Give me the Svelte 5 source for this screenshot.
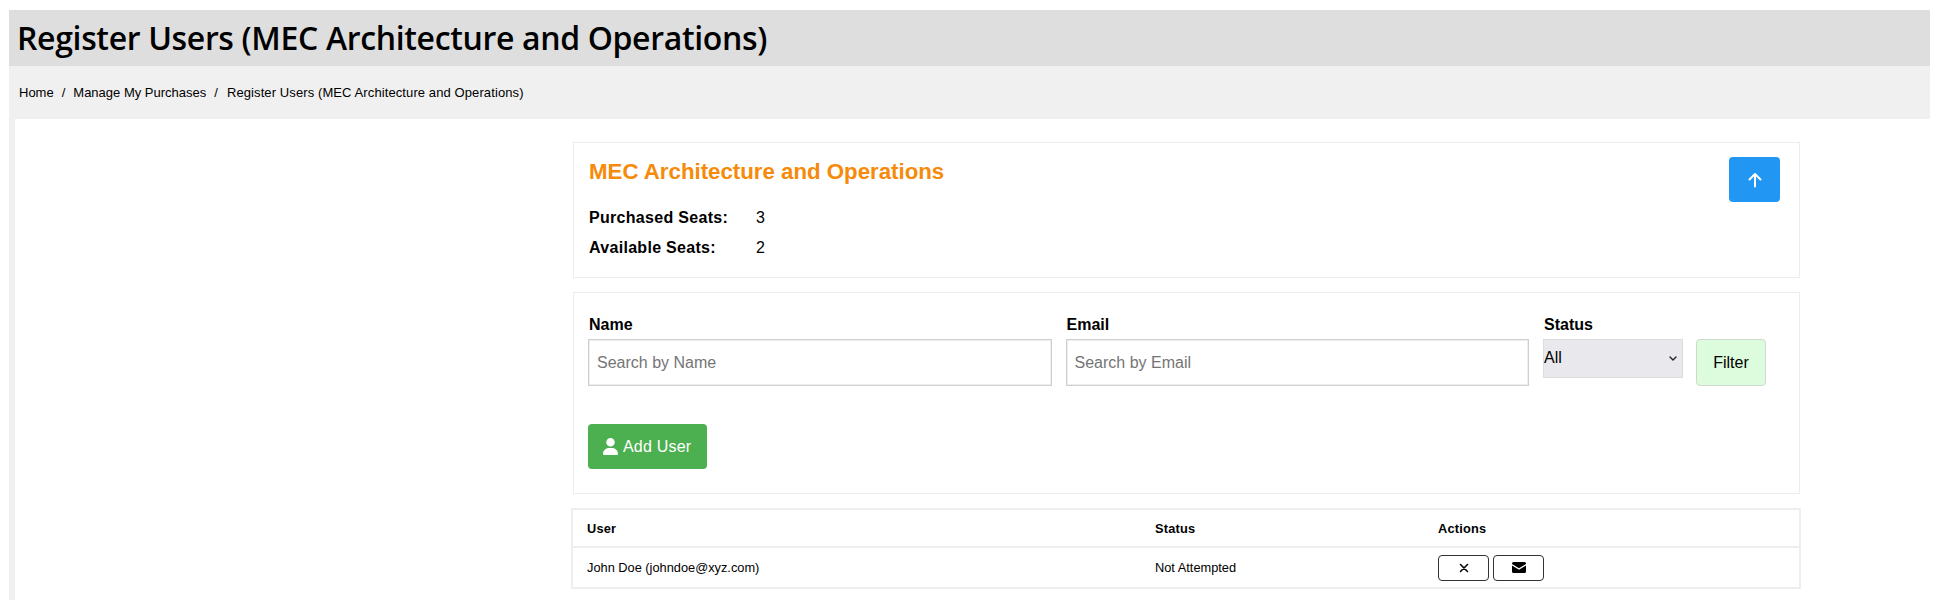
<script>
  const purchased = 3;
  const available = 2;
  const users = [{ name: "John Doe", email: "johndoe@xyz.com", status: "Not Attempted" }];
</script>

<div class="page">
  <h1 class="title">Register Users (MEC Architecture and Operations)</h1>
  <nav class="crumbs">
    <span>Home</span><i>/</i><span>Manage My Purchases</span><i>/</i><span>Register Users (MEC Architecture and Operations)</span>
  </nav>

  <main class="content">
    <section class="card summary">
      <div>
        <h2>MEC Architecture and Operations</h2>
        <div class="seat"><b>Purchased Seats:</b><span>{purchased}</span></div>
        <div class="seat"><b>Available Seats:</b><span>{available}</span></div>
      </div>
      <button class="up" aria-label="Back">
        <svg width="14" height="16" viewBox="0 0 14 16" fill="none" stroke="#fff" stroke-width="2" stroke-linecap="round" stroke-linejoin="round">
          <path d="M7 14.500V2M1.500 7.500 7 2l5.500 5.500" />
        </svg>
      </button>
    </section>

    <section class="card filters">
      <div class="row">
        <label class="field">
          <b>Name</b>
          <input type="text" placeholder="Search by Name" />
        </label>
        <label class="field">
          <b>Email</b>
          <input type="text" placeholder="Search by Email" />
        </label>
        <label class="field status">
          <b>Status</b>
          <span class="select-wrap">
            <select>
              <option>All</option>
            </select>
            <svg class="chevron" width="8" height="5" viewBox="0 0 8 5" fill="none" stroke="#222" stroke-width="1.400" stroke-linecap="round" stroke-linejoin="round"><path d="M1 1l3 3 3-3" /></svg>
          </span>
        </label>
        <button class="filter">Filter</button>
      </div>
      <button class="add">
        <svg width="15" height="17" viewBox="0 0 448 512" preserveAspectRatio="none" fill="#fff">
          <path d="M224 256a128 128 0 1 0 0-256 128 128 0 1 0 0 256zm-45.700 48C79.800 304 0 383.800 0 482.300 0 498.700 13.300 512 29.700 512h388.600c16.400 0 29.700-13.300 29.700-29.700C448 383.800 368.200 304 269.700 304h-91.400z" />
        </svg>
        Add User
      </button>
    </section>

    <table>
      <thead>
        <tr><th class="c1">User</th><th class="c2">Status</th><th>Actions</th></tr>
      </thead>
      <tbody>
        {#each users as u}
          <tr>
            <td>{u.name} ({u.email})</td>
            <td>{u.status}</td>
            <td>
              <div class="actions">
                <button aria-label="Remove">
                  <svg width="10" height="10" viewBox="0 0 10 10" stroke="#000" stroke-width="1.500" stroke-linecap="round"><path d="M1.500 1.500l7 7M8.500 1.500l-7 7" /></svg>
                </button>
                <button aria-label="Email">
                  <svg width="14" height="11" viewBox="0 0 14 11"><path d="M1.500 0h11A1.500 1.500 0 0 1 14 1.500v.6L7 6.300 0 2.100v-.6A1.500 1.500 0 0 1 1.500 0zM0 3.600l7 4.200 7-4.200v5.900A1.500 1.500 0 0 1 12.500 11h-11A1.500 1.500 0 0 1 0 9.500z" /></svg>
                </button>
              </div>
            </td>
          </tr>
        {/each}
      </tbody>
    </table>
  </main>
</div>

<style>
  :global(body) {
    background: #fff;
    font-family: "Liberation Sans", Arial, sans-serif;
    color: #000;
  }
  .page {
    margin: 10px 6px 0 9px;
    background: #f0f0f0;
  }
  .title {
    margin: 0;
    height: 56px;
    padding: 0 0 0 8px;
    background: #dedede;
    font: 600 32px/56px "Open Sans", sans-serif;
    letter-spacing: -0.35px;
  }
  .crumbs {
    height: 53px;
    padding-left: 10px;
    display: flex;
    align-items: center;
    font-size: 13px;
  }
  .crumbs i {
    font-style: normal;
    margin: 0 8px;
  }
  .crumbs span:last-child {
    margin-left: 1px;
    letter-spacing: 0.1px;
  }
  .content {
    margin-left: 6px;
    background: #fff;
    padding: 23px 0 0 558px;
    height: 481px;
    box-sizing: border-box;
  }
  .card {
    width: 1227px;
    box-sizing: border-box;
    border: 1px solid #ededed;
  }
  .summary {
    height: 136px;
    padding: 16px 19px 0 15px;
    display: flex;
    justify-content: space-between;
    align-items: flex-start;
  }
  h2 {
    margin: 0 0 18px;
    font-size: 22.25px;
    line-height: 26px;
    color: #f58a0b;
  }
  .seat {
    display: flex;
    font-size: 16px;
    line-height: 30px;
  }
  .seat b {
    flex: none;
    width: 167px;
    letter-spacing: 0.3px;
  }
  .up {
    width: 51px;
    height: 45px;
    margin-top: -2px;
    padding: 0;
    border: 0;
    border-radius: 4px;
    background: #2196f3;
    display: flex;
    align-items: center;
    justify-content: center;
  }
  .filters {
    height: 202px;
    margin-top: 14px;
    padding: 21px 14px 20px;
  }
  .row {
    display: flex;
    align-items: flex-start;
  }
  .field {
    display: flex;
    flex-direction: column;
    width: 463.5px;
    margin-right: 14px;
    font-size: 16px;
  }
  .field b {
    line-height: 22px;
    margin-bottom: 3px;
    padding-left: 1px;
  }
  input {
    height: 47px;
    box-sizing: border-box;
    border: 1px solid #cfcfcf;
    border-radius: 0;
    padding: 0 8px;
    font: 16px "Liberation Sans", sans-serif;
    box-shadow: inset 0 0 0 1px #eee;
    outline: none;
  }
  input::placeholder {
    color: #757575;
  }
  .status {
    width: 140px;
    margin-right: 13px;
  }
  .select-wrap {
    position: relative;
    display: block;
  }
  select {
    appearance: none;
    display: block;
    width: 100%;
    height: 39px;
    box-sizing: border-box;
    border: 1px solid #dcdcdc;
    background: #e9e9ed;
    color: #000;
    font: 16px "Liberation Sans", sans-serif;
    padding: 0 0 3px;
  }
  .chevron {
    position: absolute;
    right: 6px;
    top: 17px;
  }
  .filter {
    width: 70px;
    height: 47px;
    margin-top: 25px;
    border: 1px solid #ccd9cc;
    border-radius: 4px;
    background: #ddfcdd;
    font: 16px "Liberation Sans", sans-serif;
    color: #000;
  }
  .add {
    display: flex;
    align-items: center;
    gap: 5px;
    margin-top: 38px;
    width: 119px;
    height: 45px;
    padding: 0 0 0 15px;
    border: 0;
    border-radius: 4px;
    background: #4caf50;
    color: #fff;
    font: 16px "Liberation Sans", sans-serif;
    letter-spacing: 0.2px;
  }
  table {
    width: 1230px;
    margin: 14px 0 0 -2px;
    border-collapse: collapse;
    border: 2px solid #eee;
    font-size: 12.8px;
    table-layout: fixed;
  }
  th {
    text-align: left;
    height: 36px;
    padding: 0 0 0 14px;
    letter-spacing: 0.2px;
  }
  .c1 {
    width: 554px;
  }
  .c2 {
    width: 269px;
  }
  td {
    height: 39px;
    padding: 0 0 0 14px;
    border-top: 2px solid #eee;
  }
  .actions {
    display: flex;
    gap: 4px;
    align-items: center;
  }
  .actions button {
    width: 51px;
    height: 26px;
    padding: 0;
    background: #fff;
    border: 1px solid #333;
    border-radius: 4px;
    display: flex;
    align-items: center;
    justify-content: center;
  }
</style>
